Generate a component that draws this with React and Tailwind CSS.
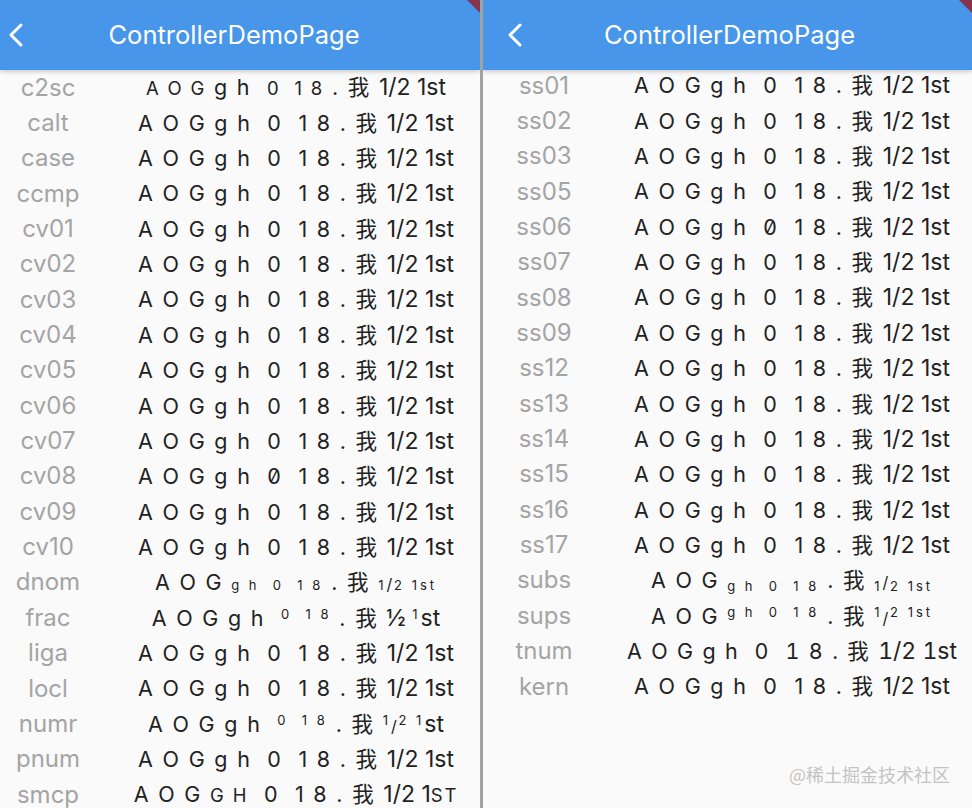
import React from 'react';

const FONT = "font-['Inter','Noto_Sans_CJK_SC',sans-serif]";

// n = normal, s = small on baseline, u = small raised, d = small lowered, c = small caps size
function Seg({ t, k }) {
  if (k === 's') return <span className="text-[13px] tracking-[3px]">{t}</span>;
  if (k === 'u') return <span className="text-[13px] tracking-[3px] align-[7px]">{t}</span>;
  if (k === 'd') return <span className="text-[13px] tracking-[3px] align-[-3px]">{t}</span>;
  if (k === 'c') return <span className="text-[18.5px]">{t}</span>;
  if (k === 'z') return <span className="[font-feature-settings:'zero']">{t}</span>;
  if (k === 'x') return <span className="text-[16px]">{t}</span>;
  if (k === 'p') return <span className="text-[23px]">{t}</span>;
  return <span>{t}</span>;
}

const normal = [['A O G g h  0  1 8 . 我 ', 'n'], ['1/2 1st', 'p']];
const slashed = [['A O G g h  ', 'n'], ['0', 'z'], ['  1 8 . 我 ', 'n'], ['1/2 1st', 'p']];

const special = {
  c2sc: [['A O G', 'c'], [' g h  ', 'n'], ['0  1 8', 'c'], [' . 我 ', 'n'], ['1/2 1st', 'p']],
  cv08: slashed,
  ss06: slashed,
  dnom: [['A O G ', 'n'], ['g h  0  1 8', 's'], [' . 我 ', 'n'], ['1', 's'], ['/', 'x'], ['2 1st', 's']],
  frac: [['A O G g h  ', 'n'], ['0  1 8', 'u'], [' . 我 ', 'n'], ['½ ', 'p'], ['1', 'u'], ['st', 'p']],
  numr: [['A O G g h  ', 'n'], ['0  1 8', 'u'], [' . 我 ', 'n'], ['1', 'u'], ['/', 'x'], ['2', 'u'], [' ', 'p'], ['1', 'u'], ['st', 'p']],
  smcp: [['A O G ', 'n'], ['G H', 'c'], ['  0  1 8 . 我 ', 'n'], ['1/2 1', 'p'], ['ST', 'c']],
  subs: [['A O G ', 'n'], ['g h  0  1 8', 'd'], [' . 我 ', 'n'], ['1', 'd'], ['/', 'x'], ['2 1st', 'd']],
  sups: [['A O G ', 'n'], ['g h  0  1 8', 'u'], [' . 我 ', 'n'], ['1', 'u'], ['/', 'x'], ['2 1st', 'u']],
};

const leftRows = ['c2sc', 'calt', 'case', 'ccmp', 'cv01', 'cv02', 'cv03', 'cv04', 'cv05', 'cv06', 'cv07', 'cv08', 'cv09', 'cv10', 'dnom', 'frac', 'liga', 'locl', 'numr', 'pnum', 'smcp'];
const rightRows = ['ss01', 'ss02', 'ss03', 'ss05', 'ss06', 'ss07', 'ss08', 'ss09', 'ss12', 'ss13', 'ss14', 'ss15', 'ss16', 'ss17', 'subs', 'sups', 'tnum', 'kern'];

function Row({ name }) {
  const segs = special[name] || normal;
  return (
    <div className="flex items-center h-[35.35px] shrink-0">
      <div className="w-[96px] shrink-0 text-center text-[24px] text-[#a4a4a4]">{name}</div>
      <div className={`w-[400px] shrink-0 text-center whitespace-pre text-[21.5px] text-[#222] ${name === 'tnum' ? 'tabular-nums' : ''}`}>
        {segs.map(([t, k], i) => (
          <span key={i} className={k === 'p' ? '' : 'tracking-[1.8px]'}>
            <Seg t={t} k={k} />
          </span>
        ))}
      </div>
    </div>
  );
}

function AppBar({ pad, shift }) {
  return (
    <div className="relative h-[70px] shrink-0 bg-[#4896ea] flex items-center shadow-[0_2px_4px_rgba(0,0,0,0.18)] z-10">
      <svg width="24" height="26" viewBox="0 0 24 26" className={pad} fill="none" stroke="white" strokeWidth="3" strokeLinecap="round" strokeLinejoin="round">
        <path d="M16 3 L6 13 L16 23" />
      </svg>
      <div className="absolute inset-0 flex items-center justify-center pointer-events-none">
        <span className={`text-[25.5px] text-white ${shift}`}>ControllerDemoPage</span>
      </div>
    </div>
  );
}

function Corner() {
  return (
    <svg className="absolute top-0 right-0 z-20" width="13" height="13" viewBox="0 0 13 13">
      <path d="M0 0 L13 0 L13 13 Z" fill="#86354f" />
    </svg>
  );
}

export default function App() {
  return (
    <div className={`w-[972px] h-[808px] flex overflow-hidden bg-[#fafafa] ${FONT}`}>
      <div className="relative w-[480px] shrink-0 flex flex-col overflow-hidden">
        <AppBar pad="ml-[5px]" shift="-translate-x-[6px]" />
        <Corner />
        <div className="flex flex-col">
          {leftRows.map((r) => <Row key={r} name={r} />)}
        </div>
      </div>
      <div className="w-[3px] shrink-0 bg-[#a2a2a2]" />
      <div className="relative flex-1 flex flex-col overflow-hidden">
        <AppBar pad="ml-[21px]" shift="translate-x-[2px]" />
        <Corner />
        <div className="flex flex-col pl-[13px] -mt-[2px]">
          {rightRows.map((r) => <Row key={r} name={r} />)}
        </div>
        <div className="absolute right-[22px] bottom-[20px] text-[18px] text-[#c4c4c4] font-['Noto_Sans_CJK_SC',sans-serif]">@稀土掘金技术社区</div>
      </div>
    </div>
  );
}
